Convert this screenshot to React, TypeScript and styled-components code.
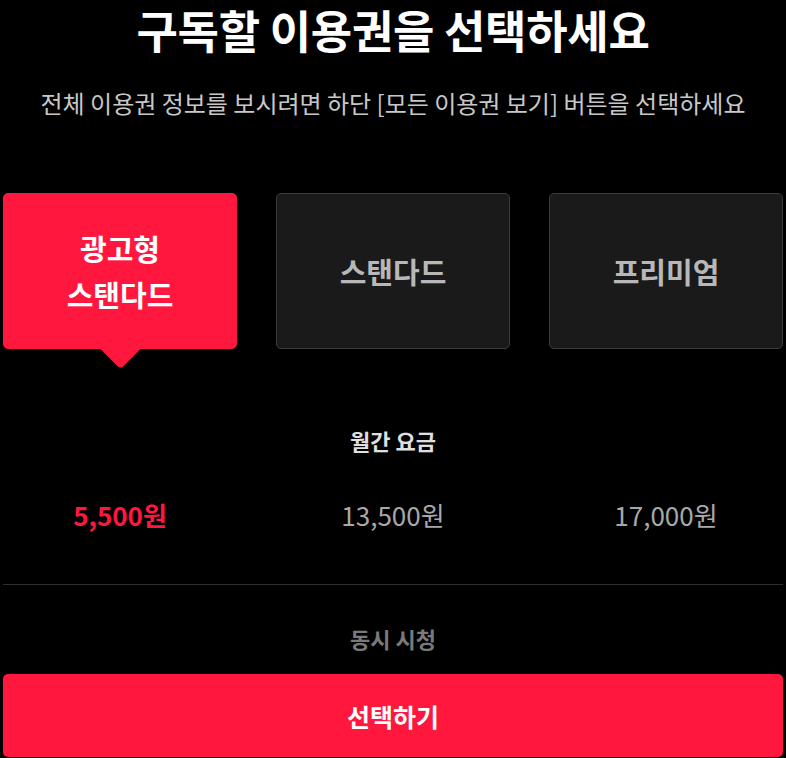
import React from "react";
import styled, { createGlobalStyle } from "styled-components";

type Plan = {
  name: string[];
  price: string;
};

const plans: Plan[] = [
  { name: ["광고형", "스탠다드"], price: "5,500원" },
  { name: ["스탠다드"], price: "13,500원" },
  { name: ["프리미엄"], price: "17,000원" },
];

const App: React.FC = (): JSX.Element => {
  const selected = 0;
  return (
    <>
      <GlobalStyle />
      <Page>
        <Title>구독할 이용권을 선택하세요</Title>
        <Subtitle>전체 이용권 정보를 보시려면 하단 [모든 이용권 보기] 버튼을 선택하세요</Subtitle>
        <PlanRow>
          {plans.map((p, i) => (
            <PlanCard key={i} $active={i === selected}>
              {p.name.map((line) => (
                <span key={line}>{line}</span>
              ))}
            </PlanCard>
          ))}
        </PlanRow>
        <SectionLabel>월간 요금</SectionLabel>
        <PriceRow>
          {plans.map((p, i) => (
            <Price key={i} $active={i === selected}>
              {p.price}
            </Price>
          ))}
        </PriceRow>
        <Divider />
        <SectionLabel $muted>동시 시청</SectionLabel>
        <SelectButton>선택하기</SelectButton>
      </Page>
    </>
  );
};

const GlobalStyle = createGlobalStyle`
  html, body {
    margin: 0;
    padding: 0;
    background: #000;
  }
  body {
    font-family: "Noto Sans CJK KR", "Noto Sans", sans-serif;
    overflow: hidden;
  }
`;

const Page = styled.div`
  width: 780px;
  margin: 0 3px;
  display: flex;
  flex-direction: column;
`;

const Title = styled.h1`
  margin: 0;
  font-size: 45px;
  line-height: 60px;
  font-weight: 700;
  color: #fff;
  text-align: center;
  letter-spacing: -0.3px;
`;

const Subtitle = styled.p`
  margin: 27px 0 0;
  font-size: 24px;
  line-height: 32px;
  font-weight: 400;
  color: #c8c8c8;
  text-align: center;
`;

const PlanRow = styled.div`
  margin-top: 74px;
  display: grid;
  grid-template-columns: repeat(3, 234px);
  justify-content: space-between;
`;

const PlanCard = styled.div<{ $active?: boolean }>`
  position: relative;
  height: 156px;
  box-sizing: border-box;
  border-radius: 5px;
  display: flex;
  flex-direction: column;
  align-items: center;
  justify-content: center;
  font-size: 29px;
  line-height: 46px;
  font-weight: 700;
  color: ${(p) => (p.$active ? "#fff" : "#b8b8b8")};
  background: ${(p) => (p.$active ? "#ff173e" : "#1a1a1a")};
  border: 1px solid ${(p) => (p.$active ? "#ff173e" : "#3c3c3c")};

  &::after {
    content: "";
    display: ${(p) => (p.$active ? "block" : "none")};
    position: absolute;
    left: 50%;
    bottom: -14.5px;
    width: 29px;
    height: 29px;
    margin-left: -14.5px;
    background: #ff173e;
    border-bottom-right-radius: 4px;
    transform: rotate(45deg);
  }
`;

const SectionLabel = styled.div<{ $muted?: boolean }>`
  margin-top: ${(p) => (p.$muted ? "38px" : "76px")};
  font-size: 22px;
  line-height: 30px;
  font-weight: 700;
  text-align: center;
  color: ${(p) => (p.$muted ? "#7a7a7a" : "#e0e0e0")};
`;

const PriceRow = styled.div`
  margin-top: 42px;
  display: grid;
  grid-template-columns: repeat(3, 234px);
  justify-content: space-between;
`;

const Price = styled.div<{ $active?: boolean }>`
  text-align: center;
  font-size: 26px;
  line-height: 36px;
  font-weight: ${(p) => (p.$active ? 700 : 400)};
  color: ${(p) => (p.$active ? "#ff173e" : "#a8a8a8")};
`;

const Divider = styled.hr`
  margin: 51px 0 0;
  border: none;
  border-top: 1px solid #2e2e2e;
`;

const SelectButton = styled.button`
  margin-top: 21px;
  height: 83px;
  border: none;
  border-radius: 5px;
  background: #ff173e;
  color: #fff;
  font-family: inherit;
  font-size: 25px;
  font-weight: 700;
  cursor: pointer;
`;

export default App;
